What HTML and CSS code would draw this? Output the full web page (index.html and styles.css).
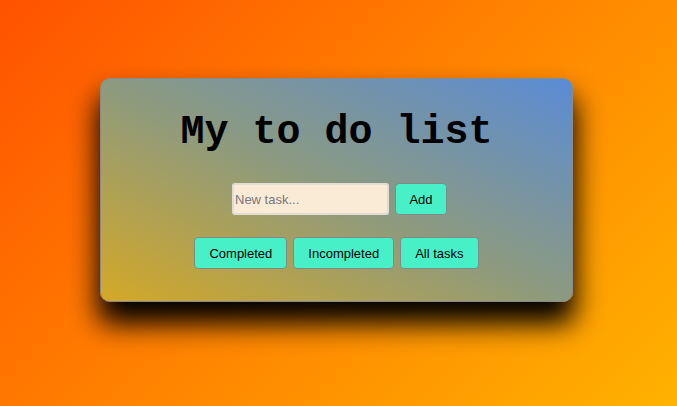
FILE: index.html
```html
<!DOCTYPE html>
<html lang="en">
<head>
<meta charset="utf-8">
<title>My to do list</title>
<link rel="stylesheet" href="styles.css">
</head>
<body>
  <main class="card">
    <h1 class="title">My to do list</h1>
    <form class="add-row">
      <input class="task-input" type="text" placeholder="New task...">
      <button class="btn btn-add" type="button">Add</button>
    </form>
    <div class="filters">
      <button class="btn btn-filter" type="button">Completed</button>
      <button class="btn btn-filter" type="button">Incompleted</button>
      <button class="btn btn-filter" type="button">All tasks</button>
    </div>
  </main>
</body>
</html>
```
FILE: styles.css
```css
html, body {
  margin: 0;
  padding: 0;
  height: 100%;
}
body {
  background: linear-gradient(135deg, #ff5200 0%, #ff8400 50%, #ffb200 100%);
  font-family: "Liberation Sans", Arial, sans-serif;
  overflow: hidden;
}
.card {
  box-sizing: border-box;
  width: 473px;
  height: 224px;
  margin: 78px 0 0 100px;
  padding: 31px 20px 32px;
  border: 1px solid #8a8a8a;
  border-radius: 10px;
  background: linear-gradient(to top right, #d4a826 0%, #8c9a80 50%, #5a8cd6 100%);
  box-shadow: 0 20px 28px 2px #000;
  display: flex;
  flex-direction: column;
  align-items: center;
}
.title {
  margin: 0;
  font-family: "Liberation Mono", "Courier New", monospace;
  font-weight: bold;
  font-size: 40px;
  line-height: 45px;
  color: #000;
}
.add-row {
  margin: 28px 0 0 6px;
  display: flex;
  gap: 6px;
}
.task-input {
  box-sizing: border-box;
  width: 157px;
  height: 32px;
  padding: 0 1px;
  border: 2px solid #e2dcd4;
  border-radius: 3px;
  background: #faebd7;
  font-family: "Liberation Sans", Arial, sans-serif;
  font-size: 13px;
  color: #000;
  outline: none;
}
.task-input::placeholder {
  color: #777;
}
.btn {
  box-sizing: border-box;
  height: 32px;
  border: 1px solid #7f8b86;
  border-radius: 4px;
  background: #48f0c8;
  font-family: "Liberation Sans", Arial, sans-serif;
  font-size: 13px;
  color: #000;
  padding: 0 14px;
}
.btn-add {
  width: 52px;
  padding: 0;
}
.filters {
  margin-top: 22px;
  display: flex;
  gap: 6px;
}
```
